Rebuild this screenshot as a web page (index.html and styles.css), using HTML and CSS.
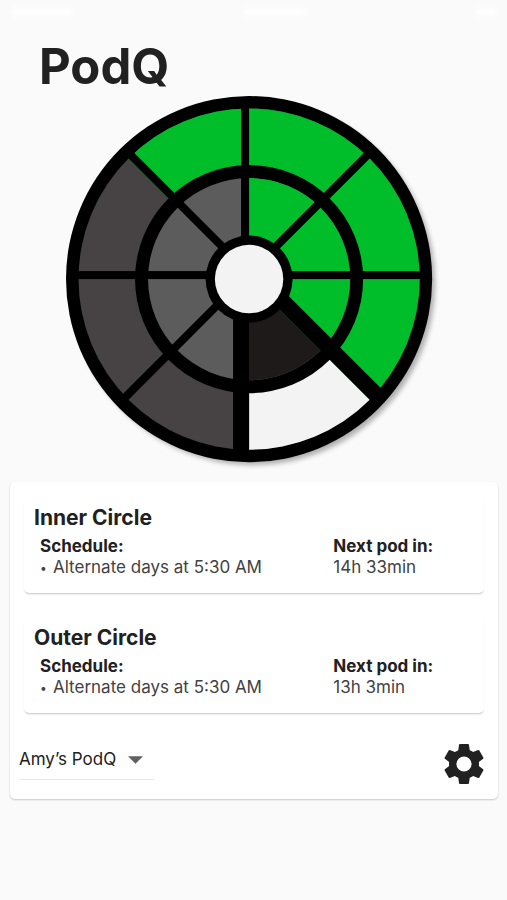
FILE: index.html
```html
<!DOCTYPE html>
<html lang="en">
<head>
<meta charset="utf-8">
<meta name="viewport" content="width=device-width, initial-scale=1">
<title>PodQ</title>
<link rel="stylesheet" href="styles.css">
</head>
<body>
<div class="status" aria-hidden="true">
  <span class="status-mark status-mark-wide"></span>
  <span class="status-mark status-mark-wide"></span>
  <span class="status-mark"></span>
</div>
<header class="header"><h1 class="title">PodQ</h1></header>
<main class="main">
  <svg class="wheel" viewBox="-183 -183 375 375" aria-hidden="true">
    <defs>
      <filter id="shadow" x="-10%" y="-10%" width="120%" height="120%">
        <feGaussianBlur stdDeviation="2.5"/>
      </filter>
      <clipPath id="outer"><circle r="170.5"/></clipPath>
      <clipPath id="inner"><circle r="101"/></clipPath>
    </defs>
    <circle cx="4" cy="4" r="182" fill="#000" opacity=".3" filter="url(#shadow)"/>
    <circle r="183" fill="#000"/>
    <!-- outer ring -->
    <g clip-path="url(#outer)">
      <rect class="past-outer" x="-180" y="-180" width="360" height="360"/>
      <path class="taken" d="M-180 -180H180V180Z"/>
      <path class="today" d="M0 0L180 180H0Z"/>
    </g>
    <circle r="114" fill="#000"/>
    <!-- inner ring -->
    <g clip-path="url(#inner)">
      <rect class="past-inner" x="-110" y="-110" width="220" height="220"/>
      <path class="taken" d="M0 0V-110H110V110Z"/>
      <path class="empty" d="M0 0L110 110H0Z"/>
    </g>
    <!-- dividers -->
    <rect x="-8" y="-174" width="8" height="174"/>
    <rect x="-8" y="-174" width="8" height="174" transform="rotate(45)"/>
    <rect x="-8" y="-174" width="8" height="174" transform="rotate(90)"/>
    <rect x="-16" y="-174" width="16" height="174" transform="rotate(135)"/>
    <rect x="0" y="-174" width="16" height="174" transform="rotate(180)"/>
    <rect x="0" y="-174" width="8" height="174" transform="rotate(225)"/>
    <rect x="0" y="-174" width="8" height="174" transform="rotate(270)"/>
    <rect x="0" y="-174" width="8" height="174" transform="rotate(315)"/>
    <circle r="43.5" fill="#000"/>
    <circle r="34.2" fill="#f3f3f3"/>
  </svg>

  <section class="panel">
    <article class="card">
      <h2 class="card-title">Inner Circle</h2>
      <div class="details">
        <div>
          <h3 class="label">Schedule:</h3>
          <p class="value"><span class="bullet">•</span>Alternate days at 5:30 AM</p>
        </div>
        <div>
          <h3 class="label">Next pod in:</h3>
          <p class="value">14h 33min</p>
        </div>
      </div>
    </article>
    <article class="card">
      <h2 class="card-title">Outer Circle</h2>
      <div class="details">
        <div>
          <h3 class="label">Schedule:</h3>
          <p class="value"><span class="bullet">•</span>Alternate days at 5:30 AM</p>
        </div>
        <div>
          <h3 class="label">Next pod in:</h3>
          <p class="value">13h 3min</p>
        </div>
      </div>
    </article>
    <div class="actions">
      <div class="picker">
        <select class="picker-select" aria-label="Device">
          <option>Amy’s PodQ</option>
        </select>
        <svg class="picker-arrow" viewBox="0 0 16 8" aria-hidden="true"><path d="M0 0h16L8 8z"/></svg>
      </div>
      <button class="settings" type="button" aria-label="Settings">
        <svg class="settings-icon" viewBox="0 0 24 24" aria-hidden="true">
          <path fill-rule="evenodd" d="M19.43 12.98c.04-.32.07-.64.07-.98s-.03-.66-.07-.98l2.11-1.65c.19-.15.24-.42.12-.64l-2-3.46c-.12-.22-.39-.3-.61-.22l-2.49 1c-.52-.4-1.08-.73-1.69-.98l-.38-2.65C14.46 2.18 14.25 2 14 2h-4c-.25 0-.46.18-.49.42l-.38 2.65c-.61.25-1.17.59-1.69.98l-2.49-1c-.23-.09-.49 0-.61.22l-2 3.46c-.13.22-.07.49.12.64l2.11 1.65c-.04.32-.07.65-.07.98s.03.66.07.98l-2.11 1.65c-.19.15-.24.42-.12.64l2 3.46c.12.22.39.3.61.22l2.49-1c.52.4 1.08.73 1.69.98l.38 2.65c.03.24.24.42.49.42h4c.25 0 .46-.18.49-.42l.38-2.65c.61-.25 1.17-.59 1.69-.98l2.49 1c.23.09.49 0 .61-.22l2-3.46c.12-.22.07-.49-.12-.64l-2.11-1.65zM12 15.8a3.8 3.8 0 1 1 0-7.6 3.8 3.8 0 0 1 0 7.6z"/>
        </svg>
      </button>
    </div>
  </section>
</main>
</body>
</html>
```
FILE: styles.css
```css
* {
  box-sizing: border-box;
}

body {
  margin: 0;
  min-height: 100vh;
  background: #fafafa;
  color: #212121;
  font-family: Inter, "Liberation Sans", sans-serif;
}

h1, h2, h3, p {
  margin: 0;
}

.status {
  display: flex;
  justify-content: space-between;
  padding: 8px 10px 0;
  height: 24px;
}

.status-mark {
  width: 22px;
  height: 8px;
  border-radius: 4px;
  background: #fff;
  filter: blur(3px);
}

.status-mark-wide {
  width: 64px;
}

.header {
  padding: 13px 39px 0;
}

.title {
  font-size: 49px;
  line-height: 59px;
  font-weight: 700;
}

.wheel {
  display: block;
  width: 74%;
  margin: 0 auto;
}

.past-outer {
  fill: #474344;
}

.past-inner {
  fill: #5c5c5c;
}

.taken {
  fill: #00be2a;
}

.today {
  fill: #f3f3f3;
}

.empty {
  fill: #1f1a1a;
}

.panel {
  margin: 11px 9px 0 10px;
  padding: 16px 14px 11px;
  border-radius: 5px;
  background: #fff;
  box-shadow: 0 1px 2px rgba(0, 0, 0, 0.2);
}

.card {
  padding: 8px 10px 15px;
  margin-bottom: 25px;
  border-radius: 5px;
  background: #fff;
  box-shadow: 0 2px 2px -1px rgba(0, 0, 0, 0.2), 0 1px 2px rgba(0, 0, 0, 0.04);
}

.card-title {
  font-size: 21px;
  line-height: 24px;
  font-weight: 700;
}

.details {
  display: grid;
  grid-template-columns: 2fr 1fr;
  column-gap: 12px;
  padding: 6px 0 0 6px;
}

.label {
  font-size: 17px;
  line-height: 21px;
  font-weight: 700;
}

.value {
  font-size: 17px;
  line-height: 21px;
  color: #424242;
}

.bullet {
  display: inline-block;
  width: 13px;
  font-size: 12px;
  line-height: 12px;
  vertical-align: 1px;
}

.actions {
  display: flex;
  justify-content: space-between;
  align-items: flex-start;
}

.picker {
  position: relative;
  margin-left: -5px;
  border-bottom: 1px solid #e8e8e8;
}

.picker-select {
  display: block;
  width: 135px;
  height: 41px;
  padding: 0 24px 0 0;
  border: 0;
  appearance: none;
  background: transparent;
  color: #212121;
  font: 17px/42px Inter, "Liberation Sans", sans-serif;
}

.picker-arrow {
  position: absolute;
  right: 11px;
  top: 18px;
  width: 15px;
  height: 8px;
  fill: #616161;
  pointer-events: none;
}

.settings {
  padding: 0;
  border: 0;
  margin: 2px -4px 0 0;
  background: transparent;
}

.settings-icon {
  display: block;
  width: 48px;
  height: 48px;
  fill: #212121;
}
```
